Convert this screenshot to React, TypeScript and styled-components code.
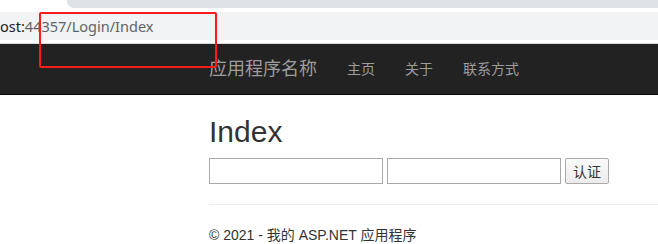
import React from 'react';
import styled, { createGlobalStyle } from 'styled-components';

const colors = {
  tabStrip: '#dee1e6',
  omnibox: '#f1f3f4',
  urlHost: '#202124',
  urlPath: '#5f6368',
  navbar: '#222222',
  navbarBorder: '#080808',
  navText: '#9d9d9d',
  text: '#333333',
  inputBorder: '#a9a9a9',
  rule: '#eeeeee',
  marker: '#ff1a1a',
};

const fonts = {
  ui: '"Noto Sans", "Open Sans", sans-serif',
  page: '"Liberation Sans", Arial, "Noto Sans CJK SC", sans-serif',
};

const GlobalStyle = createGlobalStyle`
  html, body {
    margin: 0;
    padding: 0;
    background: #fff;
    overflow: hidden;
  }
  body {
    width: 658px;
    height: 244px;
  }
`;

const Screen = styled.div`
  position: relative;
  width: 658px;
  height: 244px;
  overflow: hidden;
  background: #fff;
`;

/* browser chrome */

const TabStrip = styled.div`
  height: 12px;
  padding-left: 67px;
`;

const InactiveTabs = styled.div`
  height: 8px;
  background: ${colors.tabStrip};
  border-bottom-left-radius: 7px;
`;

const AddressBar = styled.div`
  height: 28px;
  background: ${colors.omnibox};
  display: flex;
  align-items: center;
  font-family: ${fonts.ui};
  font-size: 14.5px;
  color: ${colors.urlPath};
  white-space: nowrap;
`;

const Host = styled.span`
  color: ${colors.urlHost};
`;

const ChromeDivider = styled.div`
  height: 4px;
  border-bottom: 1px solid #dadce0;
  box-sizing: border-box;
`;

const Marker = styled.div`
  position: absolute;
  left: 39px;
  top: 12px;
  width: 178px;
  height: 56px;
  box-sizing: border-box;
  border: 2px solid ${colors.marker};
  border-radius: 2px;
`;

/* page */

const Navbar = styled.nav`
  height: 51px;
  box-sizing: border-box;
  background: ${colors.navbar};
  border-bottom: 1px solid ${colors.navbarBorder};
  display: flex;
  padding-left: 194px;
  font-family: ${fonts.page};
`;

const NavItem = styled.a<{ $brand?: boolean }>`
  display: block;
  padding: 15px;
  line-height: 20px;
  font-size: ${(p) => (p.$brand ? '18px' : '14px')};
  color: ${colors.navText};
  text-decoration: none;
`;

const Body = styled.main`
  padding: 0 0 0 209px;
  font-family: ${fonts.page};
  color: ${colors.text};
  font-size: 14px;
  line-height: 20px;
`;

const Title = styled.h2`
  margin: 20px 0 10px;
  font-size: 30px;
  line-height: 33px;
  font-weight: 500;
`;

const LoginForm = styled.form`
  display: flex;
  gap: 4px;
  margin: 0;
`;

const TextBox = styled.input`
  width: 174px;
  height: 26px;
  box-sizing: border-box;
  border: 1px solid ${colors.inputBorder};
  padding: 2px 4px;
  font-family: ${fonts.page};
  font-size: 13px;
  background: #fff;
`;

const SubmitButton = styled.button`
  width: 44px;
  height: 26px;
  box-sizing: border-box;
  border: 1px solid ${colors.inputBorder};
  border-radius: 2px;
  background: linear-gradient(#fafafa, #ececec);
  font-family: ${fonts.page};
  font-size: 14px;
  color: ${colors.text};
  padding: 0;
`;

const Rule = styled.hr`
  margin: 20px 0;
  border: 0;
  border-top: 1px solid ${colors.rule};
`;

const Footer = styled.footer`
  p {
    margin: 0 0 10px;
  }
`;

export default function App() {
  return (
    <Screen>
      <GlobalStyle />
      <TabStrip>
        <InactiveTabs />
      </TabStrip>
      <AddressBar>
        <Host>ost:</Host>44357/Login/Index
      </AddressBar>
      <ChromeDivider />
      <Navbar>
        <NavItem $brand>应用程序名称</NavItem>
        <NavItem>主页</NavItem>
        <NavItem>关于</NavItem>
        <NavItem>联系方式</NavItem>
      </Navbar>
      <Body>
        <Title>Index</Title>
        <LoginForm onSubmit={(e) => e.preventDefault()}>
          <TextBox type="text" />
          <TextBox type="password" />
          <SubmitButton type="submit">认证</SubmitButton>
        </LoginForm>
        <Rule />
        <Footer>
          <p>© 2021 - 我的 ASP.NET 应用程序</p>
        </Footer>
      </Body>
      <Marker />
    </Screen>
  );
}
